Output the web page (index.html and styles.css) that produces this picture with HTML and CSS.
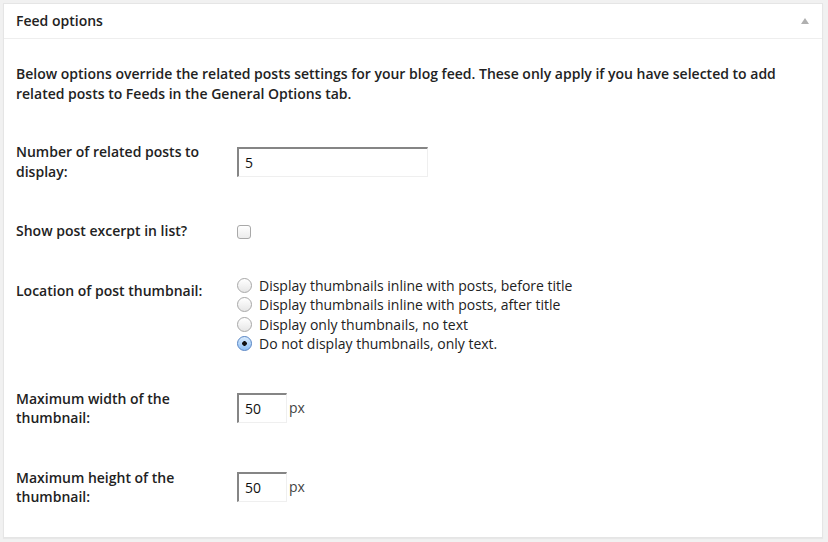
FILE: index.html
```html
<!DOCTYPE html>
<html lang="en">
<head>
<meta charset="utf-8">
<title>Feed options</title>
<link rel="stylesheet" href="styles.css">
</head>
<body>
<div class="postbox">
  <div class="postbox-header">
    <h2 class="postbox-title">Feed options</h2>
    <span class="toggle-arrow" aria-hidden="true"></span>
  </div>
  <div class="inside">
    <p class="desc">Below options override the related posts settings for your blog feed. These only apply if you have selected to add related posts to Feeds in the General Options tab.</p>
    <table class="form-table">
      <tr>
        <th>Number of related posts to display:</th>
        <td><input class="text-input wide" type="text" value="5"></td>
      </tr>
      <tr>
        <th>Show post excerpt in list?</th>
        <td><input class="checkbox" type="checkbox"></td>
      </tr>
      <tr>
        <th>Location of post thumbnail:</th>
        <td>
          <label class="radio-row"><input class="radio" type="radio" name="loc"> Display thumbnails inline with posts, before title</label>
          <label class="radio-row"><input class="radio" type="radio" name="loc"> Display thumbnails inline with posts, after title</label>
          <label class="radio-row"><input class="radio" type="radio" name="loc"> Display only thumbnails, no text</label>
          <label class="radio-row"><input class="radio" type="radio" name="loc" checked> Do not display thumbnails, only text.</label>
        </td>
      </tr>
      <tr>
        <th>Maximum width of the thumbnail:</th>
        <td><input class="text-input small" type="text" value="50"><span class="unit">px</span></td>
      </tr>
      <tr>
        <th>Maximum height of the thumbnail:</th>
        <td><input class="text-input small" type="text" value="50"><span class="unit">px</span></td>
      </tr>
    </table>
  </div>
</div>
</body>
</html>
```

FILE: styles.css
```css
html, body {
  margin: 0;
  padding: 0;
}
body {
  background: #f1f1f1;
  font-family: "Open Sans", "Liberation Sans", sans-serif;
  font-size: 14px;
  color: #222;
  padding: 3px;
}
.postbox {
  width: 820px;
  height: 535px;
  box-sizing: border-box;
  background: #fff;
  border: 1px solid #e5e5e5;
  box-shadow: 0 1px 1px rgba(0,0,0,0.04);
}
.postbox-header {
  display: flex;
  justify-content: space-between;
  align-items: center;
  height: 34px;
  padding: 0 13px 0 12px;
  border-bottom: 1px solid #eeeeee;
}
.postbox-title {
  margin: 0;
  font-size: 14px;
  font-weight: 600;
  line-height: 1.4;
  color: #222;
}
.toggle-arrow {
  width: 0;
  height: 0;
  border-left: 4px solid transparent;
  border-right: 4px solid transparent;
  border-bottom: 6px solid #b0b0b0;
}
.inside {
  padding: 0 12px 12px;
}
.desc {
  margin: 25px 0 19px;
  font-weight: 600;
  line-height: 1.4;
}
.form-table {
  border-collapse: collapse;
  border-spacing: 0;
  width: 100%;
}
.form-table th {
  width: 200px;
  padding: 20px 10px 20px 0;
  text-align: left;
  vertical-align: top;
  font-weight: 600;
  line-height: 19.5px;
}
.form-table td {
  padding: 15px 10px 15px 11px;
  vertical-align: middle;
  line-height: 19.5px;
}
.text-input {
  box-sizing: border-box;
  height: 30px;
  margin: 0;
  padding: 0 6px;
  font-family: "Open Sans", "Liberation Sans", sans-serif;
  font-size: 14px;
  color: #111;
  background: #fff;
  border-top: 2px solid #858585;
  border-left: 2px solid #858585;
  border-right: 1px solid #efefef;
  border-bottom: 1px solid #efefef;
  outline: none;
  vertical-align: middle;
}
.text-input.wide {
  width: 191px;
}
.text-input.small {
  width: 50px;
}
.unit {
  margin-left: 2px;
  vertical-align: middle;
  color: #444;
}
.checkbox {
  appearance: none;
  -webkit-appearance: none;
  box-sizing: border-box;
  width: 14px;
  height: 14px;
  margin: 0;
  border: 1px solid #a9a9a9;
  border-radius: 3px;
  background: linear-gradient(#ffffff, #ececec);
  vertical-align: middle;
}
.radio-row {
  display: flex;
  align-items: center;
  height: 19.5px;
  gap: 7px;
  color: #222;
}
.radio {
  appearance: none;
  -webkit-appearance: none;
  box-sizing: border-box;
  flex: none;
  width: 15px;
  height: 15px;
  margin: 0;
  border: 1px solid #a8a8a8;
  border-radius: 50%;
  background: linear-gradient(#ffffff, #e6e6e6);
}
.radio:checked {
  border-color: #5a86c4;
  background: radial-gradient(circle, #111 0 2px, transparent 2.6px), linear-gradient(#d9ebfd, #8ec0f6);
}
```
